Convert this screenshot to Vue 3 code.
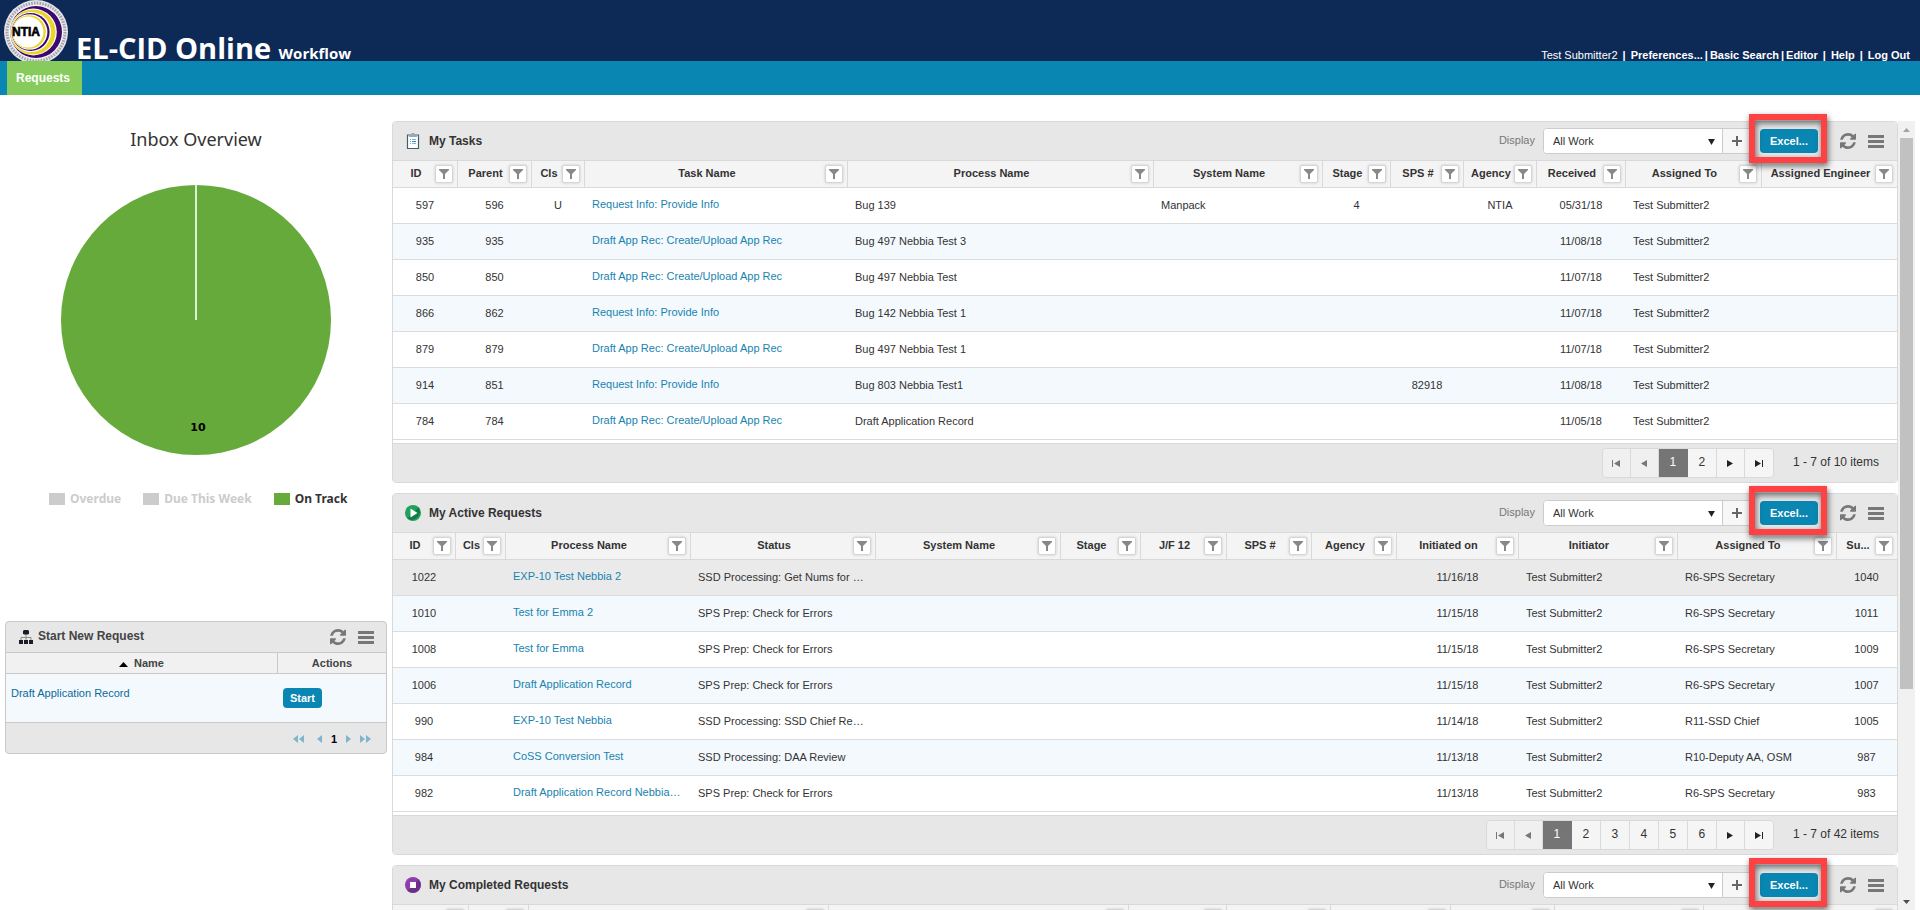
<script setup>
import { ref } from 'vue'

const C = 'center'
const L = 'left'

const panels = ref([
  {
    id: 'tasks',
    title: 'My Tasks',
    columns: [
      { label: 'ID', w: 65, align: C },
      { label: 'Parent', w: 74, align: C },
      { label: 'Cls', w: 53, align: C },
      { label: 'Task Name', w: 263, align: L, link: true },
      { label: 'Process Name', w: 306, align: L },
      { label: 'System Name', w: 169, align: L },
      { label: 'Stage', w: 68, align: C },
      { label: 'SPS #', w: 73, align: C },
      { label: 'Agency', w: 73, align: C },
      { label: 'Received', w: 89, align: C },
      { label: 'Assigned To', w: 136, align: L },
      { label: 'Assigned Engineer', w: 135, align: L }
    ],
    rows: [
      ['597', '596', 'U', 'Request Info: Provide Info', 'Bug 139', 'Manpack', '4', '', 'NTIA', '05/31/18', 'Test Submitter2', ''],
      ['935', '935', '', 'Draft App Rec: Create/Upload App Rec', 'Bug 497 Nebbia Test 3', '', '', '', '', '11/08/18', 'Test Submitter2', ''],
      ['850', '850', '', 'Draft App Rec: Create/Upload App Rec', 'Bug 497 Nebbia Test', '', '', '', '', '11/07/18', 'Test Submitter2', ''],
      ['866', '862', '', 'Request Info: Provide Info', 'Bug 142 Nebbia Test 1', '', '', '', '', '11/07/18', 'Test Submitter2', ''],
      ['879', '879', '', 'Draft App Rec: Create/Upload App Rec', 'Bug 497 Nebbia Test 1', '', '', '', '', '11/07/18', 'Test Submitter2', ''],
      ['914', '851', '', 'Request Info: Provide Info', 'Bug 803 Nebbia Test1', '', '', '82918', '', '11/08/18', 'Test Submitter2', ''],
      ['784', '784', '', 'Draft App Rec: Create/Upload App Rec', 'Draft Application Record', '', '', '', '', '11/05/18', 'Test Submitter2', '']
    ],
    pages: 2,
    summary: '1 - 7 of 10 items'
  },
  {
    id: 'active',
    title: 'My Active Requests',
    hovered: 0,
    columns: [
      { label: 'ID', w: 63, align: C },
      { label: 'Cls', w: 50, align: C },
      { label: 'Process Name', w: 185, align: L, link: true },
      { label: 'Status', w: 185, align: L },
      { label: 'System Name', w: 185, align: L },
      { label: 'Stage', w: 80, align: C },
      { label: 'J/F 12', w: 86, align: C },
      { label: 'SPS #', w: 85, align: C },
      { label: 'Agency', w: 85, align: C },
      { label: 'Initiated on', w: 122, align: C },
      { label: 'Initiator', w: 159, align: L },
      { label: 'Assigned To', w: 159, align: L },
      { label: 'Su...', w: 60, align: C }
    ],
    rows: [
      ['1022', '', 'EXP-10 Test Nebbia 2', 'SSD Processing: Get Nums for …', '', '', '', '', '', '11/16/18', 'Test Submitter2', 'R6-SPS Secretary', '1040'],
      ['1010', '', 'Test for Emma 2', 'SPS Prep: Check for Errors', '', '', '', '', '', '11/15/18', 'Test Submitter2', 'R6-SPS Secretary', '1011'],
      ['1008', '', 'Test for Emma', 'SPS Prep: Check for Errors', '', '', '', '', '', '11/15/18', 'Test Submitter2', 'R6-SPS Secretary', '1009'],
      ['1006', '', 'Draft Application Record', 'SPS Prep: Check for Errors', '', '', '', '', '', '11/15/18', 'Test Submitter2', 'R6-SPS Secretary', '1007'],
      ['990', '', 'EXP-10 Test Nebbia', 'SSD Processing: SSD Chief Re…', '', '', '', '', '', '11/14/18', 'Test Submitter2', 'R11-SSD Chief', '1005'],
      ['984', '', 'CoSS Conversion Test', 'SSD Processing: DAA Review', '', '', '', '', '', '11/13/18', 'Test Submitter2', 'R10-Deputy AA, OSM', '987'],
      ['982', '', 'Draft Application Record Nebbia…', 'SPS Prep: Check for Errors', '', '', '', '', '', '11/13/18', 'Test Submitter2', 'R6-SPS Secretary', '983']
    ],
    pages: 6,
    summary: '1 - 7 of 42 items'
  },
  {
    id: 'completed',
    title: 'My Completed Requests',
    columns: [76, 60, 300, 300, 98, 104, 120, 104, 149, 193].map((w) => ({ label: '', w, align: L })),
    rows: [],
    pages: 0,
    summary: ''
  }
])

const share = (panel, col) => {
  const total = panel.columns.reduce((sum, c) => sum + c.w, 0)
  return { width: (col.w / total) * 100 + '%' }
}

const legend = [
  { label: 'Overdue', on: false },
  { label: 'Due This Week', on: false },
  { label: 'On Track', on: true }
]

const refreshPath =
  'M1511 928q0 5-1 7-64 268-268 434.5T764 1536q-146 0-282.5-55T238 1324l-129 129q-19 19-45 19t-45-19-19-45V960q0-26 19-45t45-19h448q26 0 45 19t19 45-19 45l-137 137q71 66 161 102t187 36q134 0 250-65t186-179q11-17 53-117 8-23 30-23h192q13 0 22.5 9.5t9.5 22.5zm25-800v448q0 26-19 45t-45 19h-448q-26 0-45-19t-19-45 19-45l138-138Q969 256 768 256q-134 0-250 65T332 500q-11 17-53 117-8 23-30 23H50q-13 0-22.5-9.5T18 608v-7q65-268 270-434.5T768 0q146 0 284 55.5T1297 212l130-129q19-19 45-19t45 19 19 45z'
</script>

<template>
  <div class="page">
    <header class="banner">
      <svg class="logo" viewBox="0 0 64 61" role="img" aria-label="NTIA seal">
        <circle cx="32" cy="32" r="32" fill="#e6e6ea" />
        <circle cx="32" cy="32" r="29" fill="none" stroke="#a3a3ab" stroke-width="3" stroke-dasharray="1.6 1.2" />
        <circle cx="32" cy="32" r="26.8" fill="#fff" />
        <circle cx="32" cy="32" r="26" fill="#3b0a70" />
        <circle cx="29.4" cy="32" r="23.4" fill="#fff" />
        <circle cx="29" cy="32" r="22.6" fill="#ead52c" />
        <circle cx="27" cy="32" r="20" fill="#fff" />
        <circle cx="26.6" cy="32" r="19" fill="#3b0a70" />
        <circle cx="25.6" cy="32" r="17.8" fill="#fff" />
        <circle cx="25" cy="32" r="16.8" fill="#ead52c" />
        <circle cx="24" cy="32" r="15.4" fill="#fff" />
        <text class="logo-text" x="22" y="36" text-anchor="middle">NTIA</text>
      </svg>
      <h1 class="brand">EL-CID Online <small>Workflow</small></h1>
      <nav class="user-links" aria-label="Account">
        <span class="user">Test Submitter2</span>
        <i class="bar wide">|</i>
        <a href="#">Preferences...</a>
        <i class="bar">|</i>
        <a href="#">Basic Search</a>
        <i class="bar">|</i>
        <a href="#">Editor</a>
        <i class="bar wide">|</i>
        <a href="#">Help</a>
        <i class="bar wide">|</i>
        <a href="#">Log Out</a>
      </nav>
    </header>

    <nav class="tabs" aria-label="Main">
      <a href="#" class="tab">Requests</a>
    </nav>

    <div class="body">
      <aside class="side">
        <section class="chart">
          <h2>Inbox Overview</h2>
          <svg class="pie" viewBox="0 0 270 270" role="img" aria-label="10 on track">
            <circle cx="135" cy="135" r="135" fill="#67aa3c" />
            <path d="M135 0V135" stroke="#fff" stroke-width="1.6" />
            <text class="pie-label" x="137" y="246" text-anchor="middle">10</text>
          </svg>
          <ul class="legend">
            <li v-for="item in legend" :key="item.label" :class="{ on: item.on }">
              <i class="swatch"></i>{{ item.label }}
            </li>
          </ul>
        </section>

        <section class="starter">
          <div class="starter-head">
            <svg class="tree" viewBox="0 0 14 14" aria-hidden="true">
              <path d="M7 4v3M2 10V7.5h10V10M7 7v3" fill="none" stroke="#8d8d86" stroke-width="1" />
              <path d="M5 0h4l1 1v2.500l-1 1H5l-1-1V1z" fill="#1c1c28" />
              <path d="M0 10h4v4H0zM5 10h4v4H5zM10 10h4v4h-4z" fill="#1c1c28" />
            </svg>
            <h3>Start New Request</h3>
            <button type="button" class="icon-btn" aria-label="Refresh">
              <svg viewBox="0 0 1536 1536" width="16" height="16"><path :d="refreshPath" /></svg>
            </button>
            <button type="button" class="icon-btn" aria-label="Menu">
              <svg viewBox="0 0 16 13" width="16" height="13"><path d="M0 0h16v3H0zM0 5h16v3H0zM0 10h16v3H0z" /></svg>
            </button>
          </div>
          <table class="starter-table">
            <thead>
              <tr>
                <th class="name-col">
                  <svg class="sort" viewBox="0 0 9 5" aria-hidden="true"><path d="M0 5L4.500 0L9 5z" /></svg>Name
                </th>
                <th>Actions</th>
              </tr>
            </thead>
            <tbody>
              <tr>
                <td><a href="#">Draft Application Record</a></td>
                <td><button type="button" class="start">Start</button></td>
              </tr>
            </tbody>
          </table>
          <div class="starter-pager">
            <button type="button" class="first" aria-label="First page"><svg viewBox="0 0 11 8" width="11" height="8"><path d="M5 0v8L0 4zM11 0v8L6 4z" /></svg></button>
            <button type="button" aria-label="Previous page"><svg viewBox="0 0 5 8" width="5" height="8"><path d="M5 0v8L0 4z" /></svg></button>
            <b>1</b>
            <button type="button" aria-label="Next page"><svg viewBox="0 0 5 8" width="5" height="8"><path d="M0 0v8L5 4z" /></svg></button>
            <button type="button" aria-label="Last page"><svg viewBox="0 0 11 8" width="11" height="8"><path d="M0 0v8L5 4zM6 0v8L11 4z" /></svg></button>
          </div>
        </section>
      </aside>

      <main class="grids">
        <section v-for="panel in panels" :key="panel.id" class="panel">
          <div class="toolbar">
            <svg v-if="panel.id === 'tasks'" class="panel-icon" viewBox="0 0 16 16" aria-hidden="true">
              <path d="M3 2h10.500v13.500H2.500V2z" fill="#fff" stroke="#41606f" stroke-width="1.200" />
              <path d="M4 1h2.500V0h3v1H12v3H4z" fill="#9aaab4" />
              <path d="M5 6.500h1M5 8.500h1M5 10.500h1" stroke="#7ca9c4" />
              <path d="M7 6.500h4M7 10.500h4" stroke="#8ab4cc" />
              <path d="M7 8.500h4" stroke="#1d9ad6" />
            </svg>
            <svg v-else-if="panel.id === 'active'" class="panel-icon" viewBox="0 0 16 16" aria-hidden="true">
              <circle cx="8" cy="8" r="8" fill="#1fa35c" />
              <path d="M13.500 2.500A8 8 0 0 1 2.500 13.500L8 8z" fill="#137a43" />
              <path d="M5.500 3.500v9l7-4.500z" fill="#fff" />
            </svg>
            <svg v-else class="panel-icon" viewBox="0 0 16 16" aria-hidden="true">
              <circle cx="8" cy="8" r="8" fill="#8e3db0" />
              <path d="M13.700 2.400A8 8 0 0 1 2.400 13.700z" fill="#6b2f86" />
              <path d="M5 5h6v6H5z" fill="#fff" />
            </svg>
            <h3>{{ panel.title }}</h3>
            <label :for="'display-' + panel.id">Display</label>
            <div class="picker">
              <div class="select-wrap">
                <select :id="'display-' + panel.id">
                  <option>All Work</option>
                </select>
                <svg class="caret" viewBox="0 0 8 7" aria-hidden="true"><path d="M0 0h8L4 7z" /></svg>
              </div>
              <button type="button" class="plus" aria-label="Add view">
                <svg viewBox="0 0 10 10" width="10" height="10"><path d="M4 0h2v4h4v2H6v4H4V6H0V4h4z" /></svg>
              </button>
            </div>
            <div class="export">
              <button type="button" class="excel">Excel...</button>
              <span class="callout"></span>
            </div>
            <button type="button" class="icon-btn" aria-label="Refresh">
              <svg viewBox="0 0 1536 1536" width="16" height="16"><path :d="refreshPath" /></svg>
            </button>
            <button type="button" class="icon-btn" aria-label="Menu">
              <svg viewBox="0 0 16 13" width="16" height="13"><path d="M0 0h16v3H0zM0 5h16v3H0zM0 10h16v3H0z" /></svg>
            </button>
          </div>

          <table class="grid">
            <colgroup>
              <col v-for="(col, i) in panel.columns" :key="i" :style="share(panel, col)" />
            </colgroup>
            <thead>
              <tr>
                <th v-for="(col, i) in panel.columns" :key="i">
                  <div class="th">
                    <span>{{ col.label }}</span>
                    <button type="button" class="filter" aria-label="Filter">
                      <svg viewBox="0 0 10 10" width="10" height="10"><path d="M0 0h10v1L6 5v5H4V5L0 1z" /></svg>
                    </button>
                  </div>
                </th>
              </tr>
            </thead>
            <tbody>
              <tr v-for="(row, r) in panel.rows" :key="r" :class="{ hovered: panel.hovered === r }">
                <td v-for="(cell, c) in row" :key="c" :class="panel.columns[c].align">
                  <a v-if="panel.columns[c].link" href="#">{{ cell }}</a>
                  <template v-else>{{ cell }}</template>
                </td>
              </tr>
            </tbody>
          </table>

          <div v-if="panel.pages" class="pager">
            <div class="pages">
              <button type="button" class="dim" aria-label="First page"><svg viewBox="0 0 8 7" width="8" height="7"><path d="M0 0h1v7H0zM8 0v7L2 3.500z" /></svg></button>
              <button type="button" class="dim" aria-label="Previous page"><svg viewBox="0 0 6 7" width="6" height="7"><path d="M6 0v7L0 3.500z" /></svg></button>
              <button v-for="n in panel.pages" :key="n" type="button" class="num" :class="{ current: n === 1 }">{{ n }}</button>
              <button type="button" aria-label="Next page"><svg viewBox="0 0 6 7" width="6" height="7"><path d="M0 0v7L6 3.500z" /></svg></button>
              <button type="button" aria-label="Last page"><svg viewBox="0 0 8 7" width="8" height="7"><path d="M0 0v7L6 3.500zM7 0h1v7H7z" /></svg></button>
            </div>
            <span class="summary">{{ panel.summary }}</span>
          </div>
        </section>
      </main>

      <div class="scrollbar" aria-hidden="true">
        <svg viewBox="0 0 17 17" width="17" height="17"><path d="M5 11h7L8.500 7z" fill="#a3a3a3" /></svg>
        <div class="track"><div class="thumb"></div></div>
        <svg viewBox="0 0 17 17" width="17" height="17"><path d="M5 7h7L8.500 11z" fill="#505050" /></svg>
      </div>
    </div>
  </div>
</template>

<style>
body {
  margin: 0;
  background: #fff;
}
</style>

<style scoped>
.page {
  height: 100vh;
  display: flex;
  flex-direction: column;
  overflow: hidden;
  font-family: 'Liberation Sans', Arial, sans-serif;
  font-size: 11px;
  color: #333;
}
* {
  box-sizing: border-box;
}
h1,
h2,
h3 {
  margin: 0;
}
a {
  text-decoration: none;
}
button {
  font-family: inherit;
  margin: 0;
  padding: 0;
  border: 0;
  background: none;
  cursor: pointer;
}
svg {
  display: block;
  flex: none;
}

/* banner */
.banner {
  height: 61px;
  flex: none;
  background: #0d2a57;
  color: #fff;
  display: flex;
  align-items: flex-end;
  padding: 0 10px 0 4px;
}
.logo {
  width: 64px;
  height: 61px;
}
.logo-text {
  font-family: 'Liberation Sans', Arial, sans-serif;
  font-size: 12px;
  font-weight: bold;
  fill: #000;
  stroke: #000;
  stroke-width: 0.6;
}
.brand {
  font-family: 'Open Sans', 'Noto Sans', sans-serif;
  font-size: 29px;
  line-height: 22px;
  height: 24px;
  font-weight: 700;
  margin-left: 8px;
  white-space: nowrap;
}
.brand small {
  font-size: 15px;
  font-weight: 700;
}
.user-links {
  margin-left: auto;
  display: flex;
  font-weight: bold;
  line-height: 12px;
}
.user-links a {
  color: #fff;
}
.user {
  font-weight: normal;
}
.bar {
  font-style: normal;
  padding: 0 2px;
}
.bar.wide {
  padding: 0 5px;
}

.tabs {
  height: 34px;
  flex: none;
  display: flex;
  background: #0a86b3;
  padding-left: 7px;
}
.tab {
  background: #87cb5d;
  color: #fff;
  font-size: 12px;
  font-weight: bold;
  line-height: 34px;
  padding: 0 12px 0 9px;
}

/* page body */
.body {
  flex: 1;
  min-height: 0;
  display: grid;
  grid-template-columns: 392px 1fr 17px;
  grid-template-rows: minmax(0, 1fr);
  padding-right: 5px;
  overflow: hidden;
}
.side {
  padding-top: 32px;
}
.chart h2 {
  font-family: 'Noto Sans', 'Open Sans', sans-serif;
  font-size: 18px;
  line-height: 24px;
  font-weight: normal;
  text-align: center;
}
.pie {
  width: 270px;
  height: 270px;
  margin: 34px auto 0;
}
.pie-label {
  font-family: 'DejaVu Sans', sans-serif;
  font-size: 11px;
  font-weight: bold;
  fill: #000;
}
.legend {
  list-style: none;
  margin: 35px 0 0;
  padding: 0 0 0 49px;
  display: flex;
  gap: 22px;
  font-family: 'Noto Sans', 'Open Sans', sans-serif;
  font-size: 12px;
  font-weight: bold;
  line-height: 18px;
  color: #ccc;
}
.legend li {
  display: flex;
  align-items: center;
  gap: 5px;
}
.swatch {
  width: 16px;
  height: 12px;
  background: #ccc;
}
.legend .on {
  color: #333;
}
.on .swatch {
  background: #67aa3c;
}

.starter {
  margin: 113px 5px 0;
  border: 1px solid #c9c9c9;
  border-radius: 4px;
  background: #e7e7e7;
  overflow: hidden;
}
.starter-head {
  height: 31px;
  border-bottom: 1px solid #c9c9c9;
  display: flex;
  align-items: center;
  padding: 0 12px 0 13px;
}
.tree {
  width: 14px;
  height: 14px;
}
.starter-head h3 {
  font-size: 12px;
  line-height: 16px;
  margin: 0 auto 0 5px;
  padding-bottom: 2px;
  color: #444;
}
.starter-table {
  width: 100%;
  table-layout: fixed;
  border-collapse: separate;
  border-spacing: 0;
}
.starter-table th {
  height: 21px;
  padding: 0;
  background: #f1f1f1;
  border-bottom: 1px solid #c9c9c9;
  font-size: 11px;
  color: #444;
}
.starter-table .name-col {
  width: 272px;
  border-right: 1px solid #c9c9c9;
}
.sort {
  display: inline-block;
  width: 9px;
  height: 5px;
  margin-right: 6px;
}
.starter-table td {
  height: 49px;
  padding: 0 5px;
  background: #f3f9fd;
  border-bottom: 1px solid #c9c9c9;
}
.starter-table td a {
  display: block;
  color: #0b6a9b;
  padding-bottom: 10px;
}
.start {
  display: block;
  width: 39px;
  height: 20px;
  border-radius: 4px;
  background: #0a86b3;
  color: #fff;
  font-size: 11px;
  font-weight: bold;
}
.starter-pager {
  height: 30px;
  display: flex;
  align-items: center;
  justify-content: flex-end;
  gap: 9px;
  padding-right: 15px;
  padding-top: 2px;
  color: #000;
}
.starter-pager svg {
  fill: #80b4ca;
}
.starter-pager .first {
  margin-right: 4px;
}

.icon-btn {
  margin-left: 12px;
}
.icon-btn svg {
  fill: #777;
}

/* grid panels */
.grids {
  min-width: 0;
  padding-top: 26px;
}
.panel {
  border: 1px solid #d9d9d9;
  border-radius: 4px;
  margin-bottom: 10px;
  background: #fff;
}
.toolbar {
  height: 39px;
  border-bottom: 1px solid #d9d9d9;
  border-radius: 3px 3px 0 0;
  background: #e7e7e7;
  display: flex;
  align-items: center;
  padding: 0 13px 0 12px;
}
.panel-icon {
  width: 16px;
  height: 16px;
}
.toolbar h3 {
  font-size: 12px;
  line-height: 16px;
  margin: 0 auto 0 8px;
}
.toolbar label {
  color: #777;
  margin-right: 8px;
  padding-bottom: 2px;
}
.picker {
  display: flex;
  height: 26px;
  width: 210px;
  border: 1px solid #ccc;
  border-radius: 4px;
  background: #fff;
  overflow: hidden;
}
.select-wrap {
  position: relative;
  flex: 1;
}
select {
  appearance: none;
  width: 100%;
  height: 24px;
  border: 0;
  margin: 0;
  padding: 0 24px 0 9px;
  background: #fff;
  color: #333;
  font-family: inherit;
  font-size: 11px;
}
.caret {
  position: absolute;
  right: 7px;
  top: 10px;
  width: 7px;
  height: 6px;
  fill: #222;
  pointer-events: none;
}
.plus {
  width: 30px;
  border-left: 1px solid #ccc;
  background: #f7f7f7;
  padding-left: 9px;
}
.plus svg {
  fill: #666;
}
.export {
  position: relative;
  margin: 0 10px 0 7px;
}
.excel {
  display: block;
  width: 58px;
  height: 24px;
  border-radius: 4px;
  background: #0a86b3;
  color: #fff;
  font-size: 11px;
  font-weight: bold;
}
.callout {
  position: absolute;
  z-index: 2;
  left: -11px;
  top: -15px;
  width: 78px;
  height: 49px;
  border: 6px solid #fe4243;
  filter: drop-shadow(1px 3px 3px rgba(0, 0, 0, 0.6));
  pointer-events: none;
}

.grid {
  width: 100%;
  table-layout: fixed;
  border-collapse: separate;
  border-spacing: 0;
}
.grid th {
  height: 27px;
  padding: 0;
  background: #f4f4f4;
  border-bottom: 1px solid #d9d9d9;
  border-right: 1px solid #d9d9d9;
  font-size: 11px;
}
.grid th:last-child {
  border-right: 0;
}
.th {
  display: flex;
  align-items: center;
}
.th span {
  flex: 1;
  min-width: 0;
  text-align: center;
  white-space: nowrap;
  padding-bottom: 2px;
}
.filter {
  flex: none;
  width: 18px;
  height: 18px;
  margin: 0 4px 0 -4px;
  border: 1px solid #d5d5d5;
  border-radius: 2px;
  background: #fff;
  box-shadow: 0 0 3px rgba(0, 0, 0, 0.18);
  display: flex;
  align-items: center;
  justify-content: center;
}
.filter svg {
  fill: #888;
}
.grid td {
  height: 36px;
  padding: 0 7px 2px;
  border-bottom: 1px solid #dcdcdc;
  white-space: nowrap;
}
.grid td.center {
  text-align: center;
  padding: 0 1px 2px 0;
}
.grid tbody tr:nth-child(even) {
  background: #f3f9fd;
}
.grid tbody tr.hovered {
  background: #eaeaea;
}
.grid td a {
  display: block;
  color: #1983b0;
  padding-bottom: 2px;
}

.pager {
  margin-top: 3px;
  height: 39px;
  border-top: 1px solid #d9d9d9;
  border-radius: 0 0 3px 3px;
  background: #e7e7e7;
  display: flex;
  align-items: center;
  justify-content: flex-end;
  gap: 19px;
  padding-right: 18px;
  font-size: 12px;
}
.summary {
  padding-bottom: 2px;
}
.pages {
  display: flex;
  border: 1px solid #d9d9d9;
  border-radius: 4px;
  overflow: hidden;
}
.pages button {
  width: 28px;
  height: 28px;
  background: #f5f5f5;
  border-right: 1px solid #dadada;
  display: flex;
  align-items: center;
  justify-content: center;
  font-size: 12px;
  color: #333;
}
.pages button:last-child {
  border-right: 0;
}
.pages .num {
  width: 29px;
  padding-bottom: 2px;
}
.pages svg {
  fill: #222;
}
.pages .dim {
  background: #f0f0f0;
}
.pages .dim svg {
  fill: #777;
}
.pages .current {
  background: #757575;
  border-color: #757575;
  color: #fff;
}

/* scrollbar */
.scrollbar {
  margin-top: 26px;
  background: #f1f1f1;
  display: flex;
  flex-direction: column;
  min-height: 0;
}
.track {
  flex: 1;
  padding: 0 2px;
}
.thumb {
  height: 73%;
  background: #c1c1c1;
}
</style>
